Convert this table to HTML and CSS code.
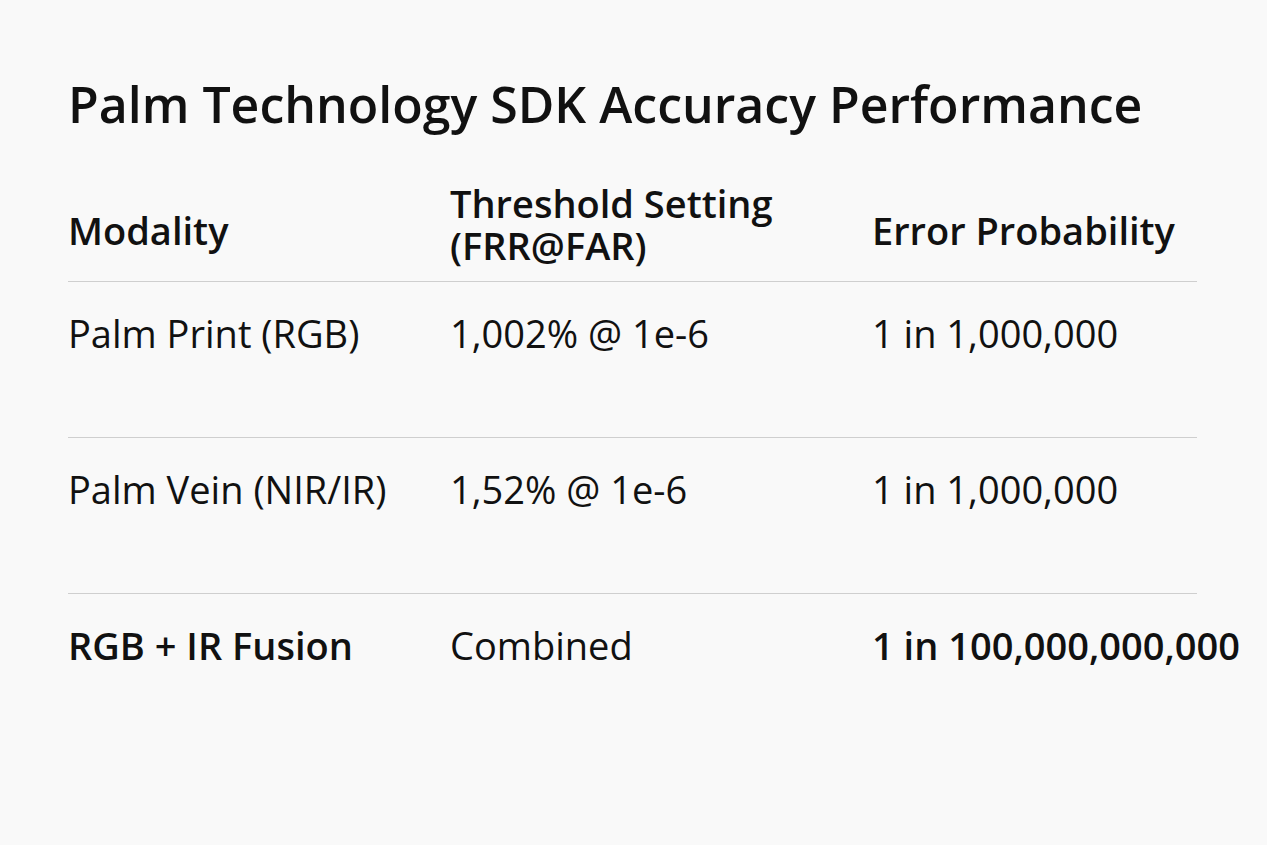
FILE: index.html
```html
<!DOCTYPE html>
<html>
<head>
<meta charset="utf-8">
<link rel="stylesheet" href="styles.css">
</head>
<body>
<main class="page">
  <h1 class="title">Palm Technology SDK Accuracy Performance</h1>
  <div class="table">
    <div class="row head">
      <div class="cell">Modality</div>
      <div class="cell">Threshold Setting<br>(FRR@FAR)</div>
      <div class="cell">Error Probability</div>
    </div>
    <div class="row">
      <div class="cell">Palm Print (RGB)</div>
      <div class="cell">1,002% @ 1e-6</div>
      <div class="cell">1 in 1,000,000</div>
    </div>
    <div class="row">
      <div class="cell">Palm Vein (NIR/IR)</div>
      <div class="cell">1,52% @ 1e-6</div>
      <div class="cell">1 in 1,000,000</div>
    </div>
    <div class="row last">
      <div class="cell strong">RGB + IR Fusion</div>
      <div class="cell">Combined</div>
      <div class="cell strong">1 in 100,000,000,000</div>
    </div>
  </div>
</main>
</body>
</html>
```
FILE: styles.css
```css
html, body {
  margin: 0;
  padding: 0;
  background: #f9f9f9;
}
body {
  font-family: "Open Sans", "Noto Sans", sans-serif;
  color: #111;
  width: 1267px;
  height: 845px;
  overflow: hidden;
}
.page {
  padding: 72px 0 0 68px;
}
.title {
  margin: 0;
  font-size: 50px;
  font-weight: 600;
  line-height: 64px;
  letter-spacing: 0;
}
.table {
  width: 1129px;
  margin-top: 43px;
}
.row {
  display: grid;
  grid-template-columns: 382px 422px 1fr;
  align-items: center;
  height: 155px;
  border-top: 1px solid #cfcfcf;
  font-size: 38px;
  white-space: nowrap;
}
.row .cell {
  padding-bottom: 54px;
}
.row.head {
  height: 102px;
  border-top: none;
  font-weight: 600;
}
.row.head .cell {
  padding-bottom: 0;
  line-height: 42px;
}
.row.head .cell:nth-child(2) {
  padding-bottom: 12px;
}
.strong {
  font-weight: 600;
}
```
